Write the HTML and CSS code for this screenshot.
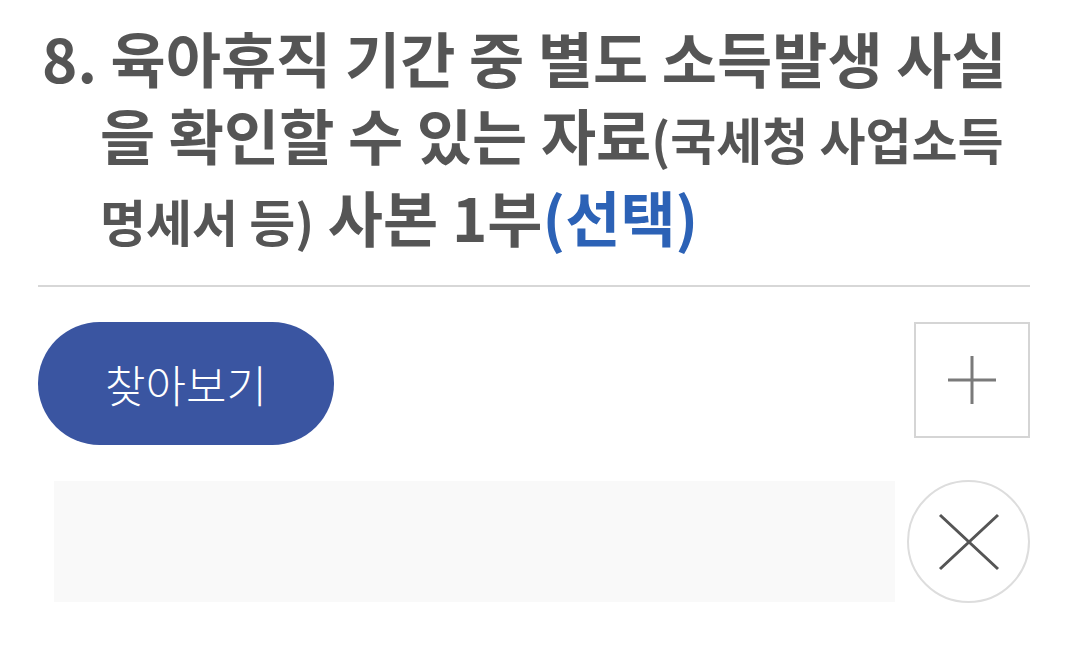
FILE: index.html
```html
<!DOCTYPE html>
<html>
    <head>
        <meta http-equiv="Content-Type" content="text/html; charset=utf-8" />
        <title>첨부서류</title>
        <link rel="stylesheet" href="styles.css">
    </head>
    <body>
        <div class="doc_item">
            <h2 class="doc_title">8. 육아휴직 기간 중 별도 소득발생 사실<br />을 확인할 수 있는 자료<span class="small_text">(국세청 사업소득<br />명세서 등)</span> 사본 1부<span class="opt">(선택)</span></h2>
            <div class="file_row">
                <button type="button" class="btn_find">찾아보기</button>
                <button type="button" class="btn_add" aria-label="추가">
                    <svg width="52" height="52" viewBox="0 0 52 52"><path d="M26 2V50M2 26H50" stroke="#7a7a7a" stroke-width="3" fill="none"/></svg>
                </button>
            </div>
            <div class="file_row">
                <div class="file_name"></div>
                <button type="button" class="btn_del" aria-label="삭제">
                    <svg width="62" height="58" viewBox="0 0 62 58"><path d="M2 2L60 56M60 2L2 56" stroke="#555" stroke-width="3" fill="none"/></svg>
                </button>
            </div>
        </div>
    </body>
</html>
```
FILE: styles.css
```css
body {
    margin: 0;
    background: #fff;
    font-family: "Noto Sans CJK KR", "Noto Sans", sans-serif;
}
.doc_item {
    padding: 18px 57px 0 38px;
}
.doc_title {
    margin: 0;
    padding: 0 0 26px 62px;
    text-indent: -58px;
    font-size: 60px;
    line-height: 77px;
    font-weight: bold;
    white-space: nowrap;
    color: #555;
    border-bottom: 2px solid #d7d7d7;
}
.small_text {
    font-size: 50px;
}
.opt {
    color: #2c62b6;
}
.file_row {
    display: flex;
    justify-content: space-between;
    align-items: center;
    margin-top: 35px;
}
.btn_find {
    width: 296px;
    height: 123px;
    border: 0;
    border-radius: 62px;
    background: #3a55a1;
    color: #fff;
    font-family: "Noto Sans CJK KR", sans-serif;
    font-size: 44px;
    font-weight: 300;
    padding: 0;
}
.btn_add {
    width: 116px;
    height: 116px;
    align-self: flex-start;
    border: 2px solid #d5d5d5;
    background: #fff;
    padding: 0;
    display: flex;
    align-items: center;
    justify-content: center;
}
.file_name {
    margin-left: 16px;
    width: 841px;
    height: 121px;
    background: #f9f9f9;
}
.btn_del {
    width: 123px;
    height: 123px;
    border: 2px solid #ddd;
    border-radius: 50%;
    background: #fff;
    padding: 0;
    display: flex;
    align-items: center;
    justify-content: center;
}
```
